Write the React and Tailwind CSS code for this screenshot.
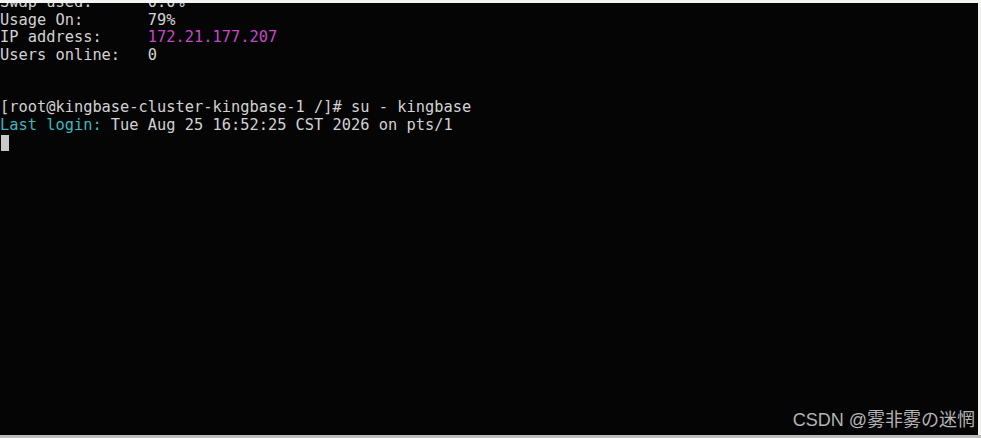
import React from "react";

const lines = [
  [{ t: "Swap used:      0.0%" }],
  [{ t: "Usage On:       79%" }],
  [{ t: "IP address:     " }, { t: "172.21.177.207", c: "text-[#c548c8]" }],
  [{ t: "Users online:   0" }],
  [{ t: " " }],
  [{ t: " " }],
  [{ t: "[root@kingbase-cluster-kingbase-1 /]# su - kingbase" }],
  [{ t: "Last login:", c: "text-[#3fb6bd]" }, { t: " Tue Aug 25 16:52:25 CST 2026 on pts/1" }],
];

export default function App() {
  return (
    <div className="w-[981px] h-[438px] bg-[#f4f4f0] flex flex-col">
      <div className="h-[3px] shrink-0" />
      <div className="flex flex-1 min-h-0">
        <div className="w-[978px] h-full bg-[#050505] overflow-hidden flex flex-col">
          {/* terminal output */}
          <div
            className="mt-[-8.75px] text-[15.35px] leading-[17.5px] text-[#d2d2d2] whitespace-pre"
            style={{ fontFamily: '"DejaVu Sans Mono", monospace' }}
          >
            {lines.map((ln, i) => (
              <div key={i}>
                {ln.map((s, j) => (
                  <span key={j} className={s.c}>{s.t}</span>
                ))}
              </div>
            ))}
            <div className="h-[17.5px] flex items-center pl-[1px]">
              <div className="w-[8px] h-[16px] bg-[#c8c8c8]" />
            </div>
          </div>
          {/* watermark */}
          <div
            className="mt-auto mb-[5px] self-end pr-[3px] text-[18px] leading-[20px] text-[#b4b4b4]"
            style={{ fontFamily: '"Liberation Sans", "Noto Sans CJK SC", sans-serif' }}
          >
            CSDN @雾非雾の迷惘
          </div>
        </div>
      </div>
      <div className="h-[3px] shrink-0 bg-[#bdbdbd]" />
    </div>
  );
}
